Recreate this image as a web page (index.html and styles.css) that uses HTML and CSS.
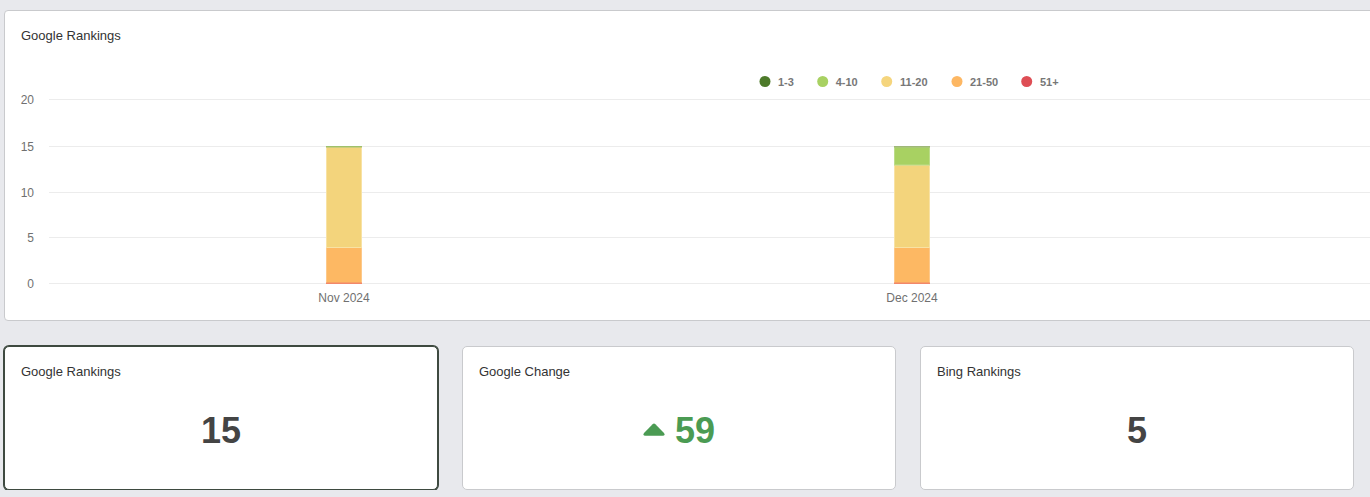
FILE: index.html
```html
<!DOCTYPE html>
<html>
<head>
<meta charset="utf-8">
<link rel="stylesheet" href="styles.css">
</head>
<body>
<div class="page">
  <section class="chart-card">
    <div class="card-title">Google Rankings</div>
    <svg class="chart" width="1380" height="275" viewBox="0 0 1380 275">
      <g class="legend">
        <circle cx="760" cy="37.5" r="5.5" fill="#4d7a2a"/><text x="773" y="41.5">1-3</text>
        <circle cx="817.7" cy="37.5" r="5.5" fill="#a8d162"/><text x="830.7" y="41.5">4-10</text>
        <circle cx="881.7" cy="37.5" r="5.5" fill="#f5d57d"/><text x="895" y="41.5">11-20</text>
        <circle cx="952" cy="37.5" r="5.5" fill="#fdb763"/><text x="965" y="41.5">21-50</text>
        <circle cx="1021.7" cy="37.5" r="5.5" fill="#de4e55"/><text x="1035" y="41.5">51+</text>
      </g>
      <g class="grid">
        <line x1="44" y1="55.5" x2="1380" y2="55.5"/>
        <line x1="44" y1="102.5" x2="1380" y2="102.5"/>
        <line x1="44" y1="148.5" x2="1380" y2="148.5"/>
        <line x1="44" y1="193.5" x2="1380" y2="193.5"/>
        <line x1="44" y1="239.5" x2="1380" y2="239.5"/>
      </g>
      <g class="ylabels">
        <text x="29" y="59.5">20</text>
        <text x="29" y="106.5">15</text>
        <text x="29" y="152.5">10</text>
        <text x="29" y="197.5">5</text>
        <text x="29" y="243.5">0</text>
      </g>
      <g class="bars">
        <rect x="321.5" y="203.5" width="35" height="36" fill="#fdb863" stroke="#fdc98a"/>
        <rect x="321.5" y="103" width="35" height="100.5" fill="#f3d47c" stroke="#f8e2a4"/>
        <rect x="321" y="102" width="36" height="1.5" fill="#9fc06a"/>
        <rect x="321" y="238.5" width="36" height="1.5" fill="#f2876a"/>

        <rect x="889.5" y="203.5" width="35" height="36" fill="#fdb863" stroke="#fdc98a"/>
        <rect x="889.5" y="121" width="35" height="82.5" fill="#f3d47c" stroke="#f8e2a4"/>
        <rect x="889.5" y="103" width="35" height="18" fill="#a8d162" stroke="#bcdc8a"/>
        <rect x="889" y="102" width="36" height="1.5" fill="#9fb878"/>
        <rect x="889" y="238.5" width="36" height="1.5" fill="#f2876a"/>
      </g>
      <g class="xlabels">
        <text x="339" y="258">Nov 2024</text>
        <text x="907" y="258">Dec 2024</text>
      </g>
    </svg>
  </section>

  <div class="stats">
    <div class="stat selected">
      <div class="card-title">Google Rankings</div>
      <div class="stat-value">15</div>
    </div>
    <div class="stat">
      <div class="card-title">Google Change</div>
      <div class="stat-value up">
        <svg class="caret" width="22" height="13" viewBox="0 0 22 13"><path d="M9.6 1.2 Q11 -0.2 12.4 1.2 L21 10 Q22.6 12.8 19.6 12.8 L2.4 12.8 Q-0.6 12.8 1 10 Z" fill="#4b9b53"/></svg>
        <span>59</span>
      </div>
    </div>
    <div class="stat">
      <div class="card-title">Bing Rankings</div>
      <div class="stat-value">5</div>
    </div>
  </div>
</div>
</body>
</html>
```

FILE: styles.css
```css
html, body {
  margin: 0;
  padding: 0;
  background: #e8e9ed;
  overflow: hidden;
  font-family: "Liberation Sans", Arial, Helvetica, sans-serif;
}

.page {
  padding: 10px 0 0 4px;
  width: 1400px;
}

.chart-card {
  width: 1380px;
  height: 311px;
  box-sizing: border-box;
  background: #fff;
  border: 1px solid #c9cacd;
  border-radius: 4px;
  overflow: hidden;
}

.card-title {
  padding: 17px 16px 0 16px;
  font-size: 13px;
  line-height: 16px;
  color: #333;
}

.chart-card .card-title {
  height: 16px;
}

.chart {
  display: block;
}

.legend text {
  font-family: "Liberation Sans", Arial, sans-serif;
  font-size: 11px;
  font-weight: bold;
  fill: #777;
}

.grid line {
  stroke: #ececec;
  stroke-width: 1;
}

.ylabels text {
  font-family: "Liberation Sans", Arial, sans-serif;
  font-size: 12px;
  fill: #707070;
  text-anchor: end;
}

.xlabels text {
  font-family: "Liberation Sans", Arial, sans-serif;
  font-size: 12px;
  fill: #707070;
  text-anchor: middle;
}

.stats {
  display: flex;
  gap: 24px;
  margin-top: 25px;
}

.stat {
  width: 434px;
  height: 144px;
  box-sizing: border-box;
  background: #fff;
  border: 1px solid #c9cacd;
  border-radius: 5px;
  display: flex;
  flex-direction: column;
}

.stat.selected {
  border-color: #3e4a40;
  box-shadow: 0 0 0 1px #3e4a40;
}

.stat-value {
  margin-top: 31px;
  display: flex;
  align-items: center;
  justify-content: center;
  gap: 10px;
  font-size: 36px;
  line-height: 40px;
  font-weight: bold;
  color: #444;
}

.stat-value.up {
  color: #4b9b53;
}

.caret {
  display: block;
  margin-top: -4px;
}
```
